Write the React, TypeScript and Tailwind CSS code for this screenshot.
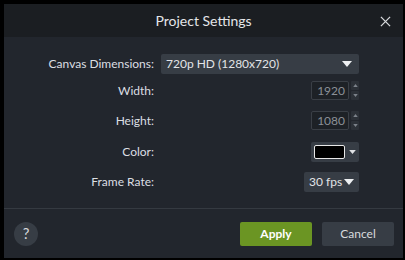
import React from 'react';

const font = { fontFamily: 'Lato, "Noto Sans", sans-serif' };

const Caret = ({ className = '' }: { className?: string }) => (
  <svg viewBox="0 0 10 6" className={className} fill="currentColor">
    <path d="M0 0h10L5 6z" />
  </svg>
);

const Spinner = () => (
  <div className="flex flex-col gap-[1px] ml-[2px] h-[19px]">
    <div className="w-[8px] h-[9px] bg-[#2c3138] rounded-[1px] flex items-center justify-center text-[#7c828a]">
      <svg viewBox="0 0 6 4" className="w-[5px] h-[3px]" fill="currentColor"><path d="M0 4h6L3 0z" /></svg>
    </div>
    <div className="w-[8px] h-[9px] bg-[#2c3138] rounded-[1px] flex items-center justify-center text-[#7c828a]">
      <svg viewBox="0 0 6 4" className="w-[5px] h-[3px]" fill="currentColor"><path d="M0 0h6L3 4z" /></svg>
    </div>
  </div>
);

const Label = ({ children }: { children: React.ReactNode }) => (
  <div className="w-[157px] shrink-0 text-right pr-[7px] text-[12px] text-[#dcdfe3]">{children}</div>
);

const NumberField = ({ value }: { value: string }) => (
  <div className="flex items-start">
    <div className="w-[38px] h-[19px] bg-[#1d2126] border border-[#3a3f46] rounded-[2px] text-right pr-[3px] text-[12px] leading-[17px] text-[#8b9097]">
      {value}
    </div>
    <Spinner />
  </div>
);

export default function App() {
  return (
    <div className="w-[405px] h-[260px] bg-black pl-[4px] pt-[4px] pr-[2px] pb-[2px]" style={font}>
      <div className="w-full h-full flex flex-col bg-[#22262d]">
        <div className="h-[33px] shrink-0 bg-[#1b1e22] relative flex items-center justify-center">
          <span className="text-[14px] text-[#e4e6e9]">Project Settings</span>
          <svg viewBox="0 0 12 12" className="absolute right-[12px] top-[12px] w-[11px] h-[11px] text-[#d8dadd]" stroke="currentColor" strokeWidth="1.4">
            <path d="M1 1l10 10M11 1L1 11" />
          </svg>
        </div>

        <div className="flex-1 flex flex-col pt-[17px]">
          <div className="flex items-center h-[20px]">
            <Label>Canvas Dimensions:</Label>
            <div className="w-[198px] h-[20px] bg-[#373d45] rounded-[2px] flex items-center justify-between pl-[5px] pr-[7px] text-[12px] text-[#e2e4e7]">
              <span>720p HD (1280x720)</span>
              <Caret className="w-[10px] h-[6px] text-[#eef0f2]" />
            </div>
          </div>

          <div className="flex items-center h-[19px] mt-[7px]">
            <Label>Width:</Label>
            <div className="w-[198px] flex justify-end"><NumberField value="1920" /></div>
          </div>

          <div className="flex items-center h-[19px] mt-[11px]">
            <Label>Height:</Label>
            <div className="w-[198px] flex justify-end"><NumberField value="1080" /></div>
          </div>

          <div className="flex items-center h-[20px] mt-[12px]">
            <Label>Color:</Label>
            <div className="w-[198px] flex justify-end">
              <div className="w-[48px] h-[20px] bg-[#373d45] rounded-[2px] flex items-center pl-[3px]">
                <div className="w-[31px] h-[14px] bg-black border border-[#e8e8e8] rounded-[2px]" />
                <Caret className="w-[7px] h-[4px] ml-[4px] text-[#e0e2e5]" />
              </div>
            </div>
          </div>

          <div className="flex items-center h-[20px] mt-[10px]">
            <Label>Frame Rate:</Label>
            <div className="w-[198px] flex justify-end">
              <div className="w-[55px] h-[20px] bg-[#373d45] rounded-[2px] flex items-center pl-[5px] gap-[2px] text-[12px] text-[#e2e4e7]">
                <span>30 fps</span>
                <Caret className="w-[10px] h-[6px] text-[#eef0f2]" />
              </div>
            </div>
          </div>
        </div>

        <div className="h-[50px] shrink-0 border-t border-[#353a41] flex items-center pl-[10px] pr-[9px]">
          <div className="w-[24px] h-[24px] rounded-full bg-[#373d45] flex items-center justify-center text-[15px] text-[#d5d8dc]">?</div>
          <div className="flex-1" />
          <button className="w-[72px] h-[24px] bg-[#6b9523] rounded-[2px] text-[12px] font-bold text-white">Apply</button>
          <button className="w-[72px] h-[24px] ml-[10px] bg-[#373d45] rounded-[2px] text-[12px] text-[#d8dadd]">Cancel</button>
        </div>
      </div>
    </div>
  );
}
